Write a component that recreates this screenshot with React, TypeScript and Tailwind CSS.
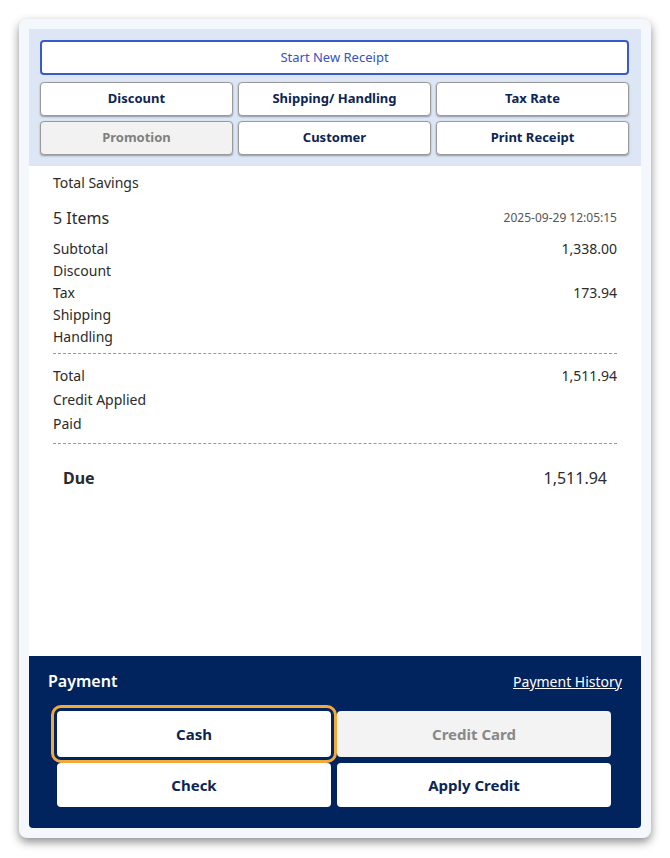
const FONT = "font-['Noto_Sans','Open_Sans',sans-serif]";

const topButtons = [
  { label: 'Discount' },
  { label: 'Shipping/ Handling' },
  { label: 'Tax Rate' },
  { label: 'Promotion', disabled: true },
  { label: 'Customer' },
  { label: 'Print Receipt' },
];

const summary = [
  { label: 'Subtotal', value: '1,338.00' },
  { label: 'Discount', value: '' },
  { label: 'Tax', value: '173.94' },
  { label: 'Shipping', value: '' },
  { label: 'Handling', value: '' },
];

const totals = [
  { label: 'Total', value: '1,511.94' },
  { label: 'Credit Applied', value: '' },
  { label: 'Paid', value: '' },
];

export default function App() {
  return (
    <div className={`w-[670px] h-[858px] bg-white pt-[19px] pl-[19px] ${FONT}`}>
      <div className="w-[632px] h-[819px] rounded-lg bg-[#f4f7fc] p-[10px] shadow-[0_4px_10px_rgba(0,0,0,0.45)]">
        <div className="flex flex-col h-full">
          {/* toolbar */}
          <div className="bg-[#dce6f5] pl-[11px] pr-[12px] pt-[11px] pb-[11px]">
            <button className="w-full h-[35px] rounded border-2 border-[#3a5bc7] bg-white text-[13px] text-[#3452c4]">
              Start New Receipt
            </button>
            <div className="grid grid-cols-3 gap-x-[5px] gap-y-[5px] mt-[7px]">
              {topButtons.map(b => (
                <button
                  key={b.label}
                  className={`h-[34px] rounded border border-[#9a9a9a] shadow-[0_1px_2px_rgba(0,0,0,0.35)] text-[13px] font-bold ${
                    b.disabled ? 'bg-[#f2f2f2] text-[#808080]' : 'bg-white text-[#0d2553]'
                  }`}
                >
                  {b.label}
                </button>
              ))}
            </div>
          </div>

          {/* receipt summary */}
          <div className="flex-1 bg-white px-[24px] pt-[7px] text-[#2b2b2b]">
            <div className="text-[14px] leading-[20px]">Total Savings</div>
            <div className="flex justify-between items-center mt-[13px] h-[24px]">
              <span className="text-[16px]">5 Items</span>
              <span className="text-[12px] text-[#555]">2025-09-29 12:05:15</span>
            </div>
            <div className="mt-[8px]">
              {summary.map(r => (
                <div key={r.label} className="flex justify-between text-[14px] leading-[22px]">
                  <span>{r.label}</span>
                  <span>{r.value}</span>
                </div>
              ))}
            </div>
            <div className="mt-[5px] border-t border-dashed border-[#999]" />
            <div className="mt-[10px]">
              {totals.map(r => (
                <div key={r.label} className="flex justify-between text-[14px] leading-[24px]">
                  <span>{r.label}</span>
                  <span>{r.value}</span>
                </div>
              ))}
            </div>
            <div className="mt-[7px] border-t border-dashed border-[#999]" />
            <div className="flex justify-between items-center mt-[22px] px-[10px] h-[24px]">
              <span className="text-[16px] font-bold">Due</span>
              <span className="text-[16px]">1,511.94</span>
            </div>
          </div>

          {/* payment */}
          <div className="h-[172px] bg-[#02245e] rounded-b pl-[28px] pr-[30px] pt-[12px] pb-[21px]">
            <div className="flex justify-between items-center -ml-[9px] -mr-[11px] h-[26px]">
              <span className="text-white text-[16px] font-semibold">Payment</span>
              <a className="text-white text-[14px] underline">Payment History</a>
            </div>
            <div className="grid grid-cols-2 gap-[6px] mt-[17px]">
              <button className="h-[46px] rounded-sm bg-white text-[15px] font-bold text-[#0d2553] outline-3 outline-offset-3 outline-[#f2a93b]">
                Cash
              </button>
              <button className="h-[46px] rounded-sm bg-[#f3f3f3] text-[15px] font-bold text-[#888]">
                Credit Card
              </button>
              <button className="h-[44px] rounded-sm bg-white text-[15px] font-bold text-[#0d2553]">
                Check
              </button>
              <button className="h-[44px] rounded-sm bg-white text-[15px] font-bold text-[#0d2553]">
                Apply Credit
              </button>
            </div>
          </div>
        </div>
      </div>
    </div>
  );
}
